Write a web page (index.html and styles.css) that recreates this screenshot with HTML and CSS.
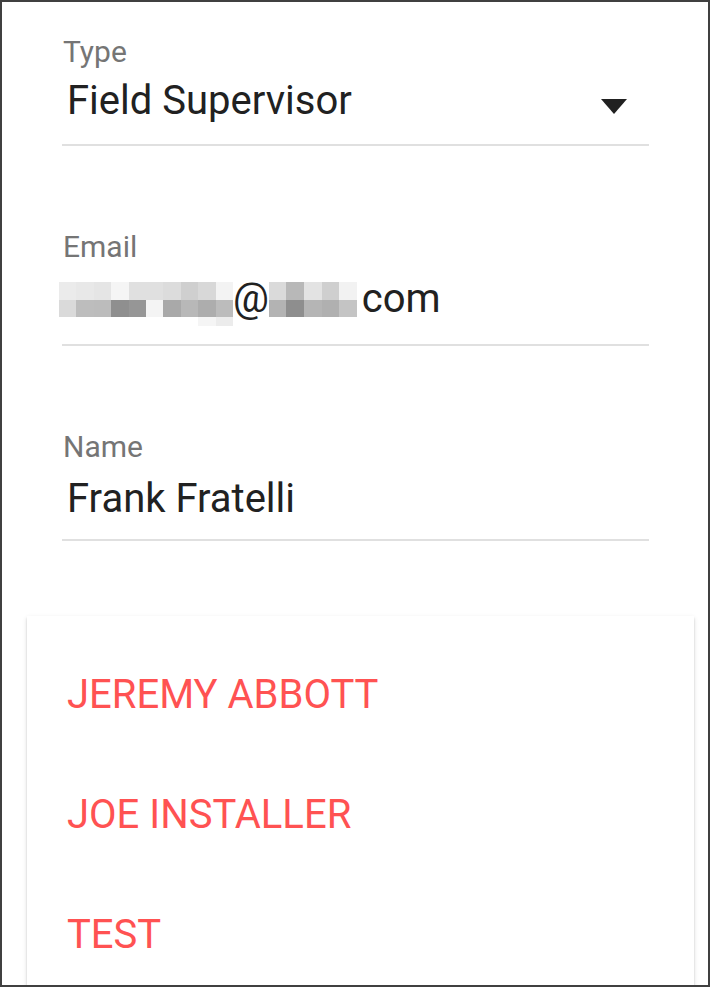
FILE: index.html
```html
<!DOCTYPE html>
<html lang="en">
<head>
<meta charset="utf-8">
<title>Supervisor</title>
<link rel="stylesheet" href="styles.css">
</head>
<body>
<div class="frame">
  <div class="form">
    <div class="field field-select">
      <div class="label">Type</div>
      <div class="value select-value">
        <span>Field Supervisor</span>
        <span class="arrow"></span>
      </div>
    </div>
    <div class="field">
      <div class="label">Email</div>
      <div class="value email-value">
        <span class="mosaic mosaic-a">
          <i style="background:#ebebeb"></i><i style="background:#e8e8e8"></i><i style="background:#e5e5e5"></i><i style="background:#f5f5f5"></i><i style="background:#e0e0e0"></i><i style="background:#e0e0e0"></i><i style="background:#dcdcdc"></i><i style="background:#cfcfcf"></i><i style="background:#d8d8d8"></i><i style="background:#f3f3f3"></i>
          <i style="background:#dadada"></i><i style="background:#bdbdbd"></i><i style="background:#bcbcbc"></i><i style="background:#8f8f8f"></i><i style="background:#969696"></i><i style="background:#f4f4f4"></i><i style="background:#a9a9a9"></i><i style="background:#b8b8b8"></i><i style="background:#adadad"></i><i style="background:#bcbcbc"></i>
          <i></i><i></i><i></i><i></i><i></i><i></i><i></i><i></i><i style="background:#f5f5f5"></i><i style="background:#ececec"></i>
        </span><span class="at">@</span><span class="mosaic mosaic-b">
          <i style="background:#dadada"></i><i style="background:#b8b8b8"></i><i style="background:#e3e3e3"></i><i style="background:#cfcfcf"></i><i style="background:#f2f2f2"></i>
          <i style="background:#b3b3b3"></i><i style="background:#8e8e8e"></i><i style="background:#b5b5b5"></i><i style="background:#b0b0b0"></i><i style="background:#c4c4c4"></i>
        </span><span class="com">com</span>
      </div>
    </div>
    <div class="field">
      <div class="label">Name</div>
      <div class="value">Frank Fratelli</div>
    </div>
  </div>
  <div class="card">
    <div class="item">JEREMY ABBOTT</div>
    <div class="item">JOE INSTALLER</div>
    <div class="item">TEST</div>
  </div>
</div>
</body>
</html>
```
FILE: styles.css
```css
html, body {
  margin: 0;
  padding: 0;
  background: #ffffff;
}

body {
  font-family: Roboto, "Noto Sans", "Liberation Sans", sans-serif;
}

.frame {
  box-sizing: border-box;
  width: 710px;
  height: 987px;
  border: 2px solid #404040;
  overflow: hidden;
  background: #ffffff;
}

.form {
  padding: 33px 59px 0 60px;
  display: flex;
  flex-direction: column;
  gap: 84px;
}

.field {
  border-bottom: 2px solid #e0e0e0;
  padding-bottom: 18px;
}

.field-select {
  padding-bottom: 21px;
}

.label {
  font-size: 30px;
  line-height: 34px;
  color: #757575;
  padding-left: 1px;
}

.value {
  font-size: 40px;
  line-height: 44px;
  color: #212121;
  margin-top: 13px;
  padding-left: 5px;
}

.field-select .value {
  margin-top: 10px;
}

.select-value {
  display: flex;
  align-items: flex-start;
  justify-content: space-between;
  padding-right: 22px;
}

.arrow {
  width: 0;
  height: 0;
  border-left: 13px solid transparent;
  border-right: 13px solid transparent;
  border-top: 15px solid #212121;
  margin-top: 20px;
}

.email-value {
  display: flex;
  align-items: flex-start;
}

.mosaic {
  display: grid;
  grid-auto-rows: 17.5px;
  margin-top: 5px;
}

.mosaic i {
  display: block;
}

.mosaic-a {
  grid-template-columns: repeat(10, 17.4px);
  grid-template-rows: 17.5px 17.5px 9px;
  margin-left: -8px;
}

.mosaic-b {
  grid-template-columns: repeat(5, 17.6px);
  margin-left: 0;
}

.com {
  margin-left: 5px;
}

.card {
  margin: 75px 14px 0 25px;
  padding-top: 19px;
  background: #ffffff;
  box-shadow: 0 3px 2px -2px rgba(0, 0, 0, 0.2), 0 2px 2px 0 rgba(0, 0, 0, 0.14), 0 2px 5px 0 rgba(0, 0, 0, 0.12);
  height: 600px;
}

.item {
  font-size: 40px;
  line-height: 120px;
  height: 120px;
  color: #ff5252;
  padding-left: 40px;
}
```
